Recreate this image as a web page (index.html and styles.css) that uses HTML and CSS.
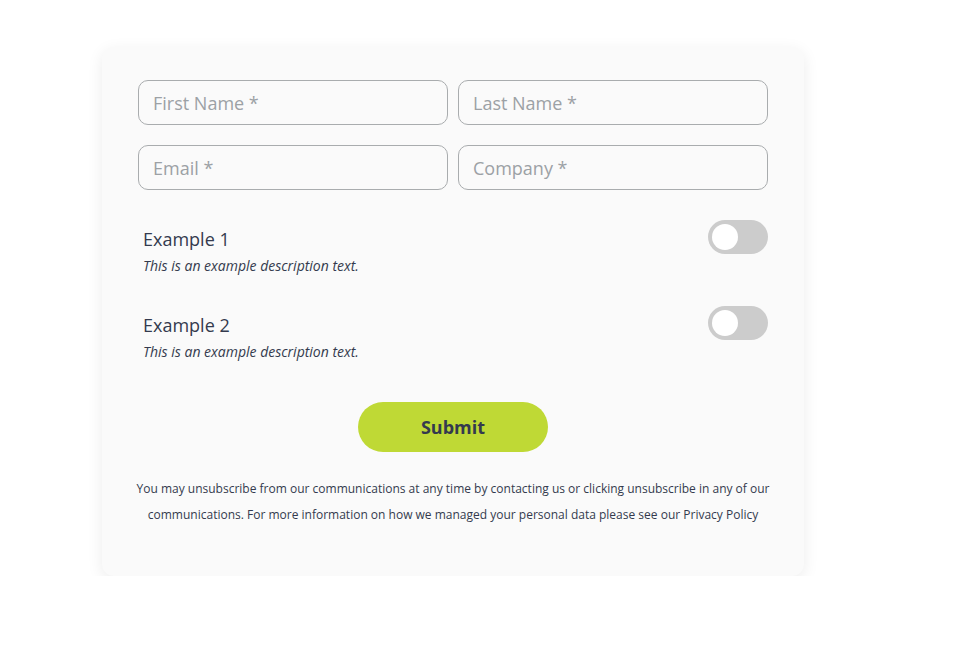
FILE: index.html
```html
<!DOCTYPE html>
<html lang="en">
<head>
<meta charset="utf-8">
<title>Form</title>
<link rel="stylesheet" href="styles.css">
</head>
<body>
<div class="page">
  <form class="card">
    <div class="grid">
      <input class="field" type="text" placeholder="First Name *">
      <input class="field" type="text" placeholder="Last Name *">
      <input class="field" type="email" placeholder="Email *">
      <input class="field" type="text" placeholder="Company *">
    </div>
    <div class="opt first">
      <div class="opt-text">
        <div class="opt-label">Example 1</div>
        <div class="opt-desc">This is an example description text.</div>
      </div>
      <span class="toggle"><span class="knob"></span></span>
    </div>
    <div class="opt">
      <div class="opt-text">
        <div class="opt-label">Example 2</div>
        <div class="opt-desc">This is an example description text.</div>
      </div>
      <span class="toggle"><span class="knob"></span></span>
    </div>
    <div class="actions">
      <button type="button" class="submit">Submit</button>
    </div>
    <p class="legal">You may unsubscribe from our communications at any time by contacting us or clicking unsubscribe in any of our communications. For more information on how we managed your personal data please see our Privacy Policy</p>
  </form>
</div>
</body>
</html>
```
FILE: styles.css
```css
* { box-sizing: border-box; }
html, body { margin: 0; padding: 0; background: #ffffff; }
body { font-family: "Open Sans", "Liberation Sans", sans-serif; color: #343a4e; }

.page { padding: 47px 0 0 102px; }

.card {
  width: 702px;
  background: #fafafa;
  border-radius: 12px;
  box-shadow: 0 4px 16px rgba(0, 0, 0, 0.08);
  padding: 33px 36px 48px;
}

.grid {
  display: grid;
  grid-template-columns: 310px 310px;
  column-gap: 10px;
  row-gap: 20px;
}

.field {
  height: 45px;
  width: 100%;
  border: 1px solid #a9acae;
  border-radius: 10px;
  background: #fafafa;
  padding: 0 14px;
  font-family: inherit;
  font-size: 18px;
  color: #343a4e;
  outline: none;
}
.field::placeholder { color: #9ca1a5; opacity: 1; }

.opt {
  display: flex;
  justify-content: space-between;
  align-items: flex-start;
  padding-left: 5px;
  margin-top: 30px;
}

.opt-label {
  font-size: 18px;
  line-height: 24px;
  margin-top: 7px;
}
.opt-desc {
  font-size: 14px;
  font-style: italic;
  line-height: 20px;
  margin-top: 5px;
}

.toggle {
  display: flex;
  align-items: center;
  width: 60px;
  height: 34px;
  border-radius: 17px;
  background: #cccccc;
  padding: 0 4px;
}
.knob {
  width: 26px;
  height: 26px;
  border-radius: 50%;
  background: #ffffff;
}

.actions {
  display: flex;
  justify-content: center;
  margin-top: 40px;
}
.submit {
  width: 190px;
  height: 50px;
  border: none;
  border-radius: 25px;
  background: #bfd935;
  font-family: inherit;
  font-weight: 700;
  font-size: 18px;
  color: #343a4e;
  cursor: pointer;
}

.legal {
  margin: 24px -4px 0;
  text-align: center;
  font-size: 12px;
  line-height: 26px;
  color: #343a4e;
}
```
